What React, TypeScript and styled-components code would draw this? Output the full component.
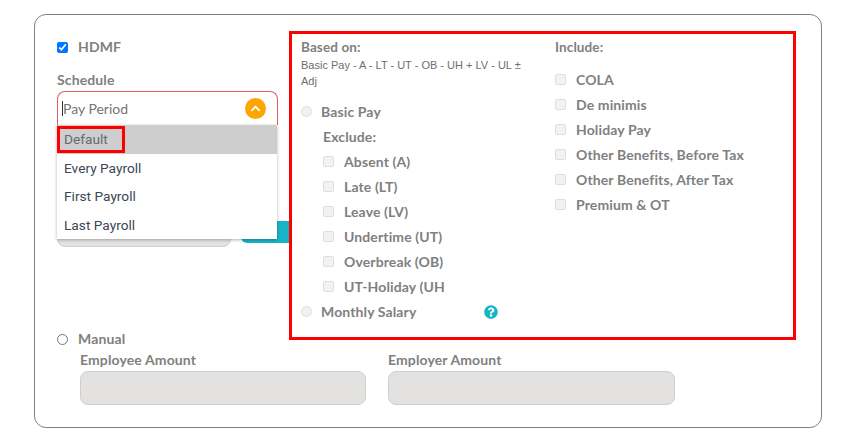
import React from "react";
import styled, { createGlobalStyle } from "styled-components";
import { FaQuestionCircle, FaChevronUp } from "react-icons/fa";

const Global = createGlobalStyle`
  html, body { margin: 0; padding: 0; background: #fff; }
  body { font-family: "Lato", "Liberation Sans", sans-serif; }
`;

const Card = styled.div`
  box-sizing: border-box;
  width: 788px;
  height: 414px;
  margin: 14px 0 0 34px;
  padding: 16px 22px 0;
  border: 1px solid #808080;
  border-radius: 12px;
  display: grid;
  grid-template-columns: 232px 507px;
  grid-template-rows: 301px 14px auto;
`;

const LeftColumn = styled.div`
  display: flex;
  flex-direction: column;
  grid-column: 1;
  grid-row: 1;
`;

const Text = styled.span`
  font-size: 14px;
  font-weight: 700;
  color: #808080;
  line-height: 18px;
  white-space: nowrap;
  letter-spacing: 0.12px;
`;

const Row = styled.label<{ $indent?: number; $mt?: number }>`
  display: flex;
  align-items: center;
  height: 25px;
  padding-left: ${(p) => p.$indent ?? 0}px;
  margin-top: ${(p) => p.$mt ?? 0}px;
`;

const HdmfRow = styled.label`
  display: flex;
  align-items: center;
  height: 18px;
  margin-top: 7px;
`;

const ManualRow = styled.label`
  grid-column: 1;
  grid-row: 2;
  display: flex;
  align-items: center;
  height: 14px;
`;

const NativeCheck = styled.input.attrs({ type: "checkbox" })`
  width: 11px;
  height: 11px;
  margin: 0 10px 0 0;
  flex: none;
  accent-color: #0075ff;
`;

const MutedCheck = styled.input.attrs({ type: "checkbox", disabled: true })`
  appearance: none;
  box-sizing: border-box;
  width: 11px;
  height: 11px;
  margin: 0 10px 0 0;
  flex: none;
  background: #f2f2f2;
  border: 1px solid #dedede;
  border-radius: 2px;
`;

const MutedRadio = styled.input.attrs({ type: "radio", disabled: true })`
  appearance: none;
  box-sizing: border-box;
  width: 11px;
  height: 11px;
  margin: 0 9px 0 0;
  flex: none;
  background: #f2f2f2;
  border: 1px solid #dedede;
  border-radius: 50%;
`;

const OutlineRadio = styled.input.attrs({ type: "radio" })`
  appearance: none;
  box-sizing: border-box;
  width: 11px;
  height: 11px;
  margin: 0 10px 0 0;
  flex: none;
  background: #fff;
  border: 1px solid #767676;
  border-radius: 50%;
`;

const FieldLabel = styled(Text)`
  display: block;
  margin-top: 15px;
`;

const SelectWrap = styled.div`
  position: relative;
  width: 221px;
  margin-top: 2px;
`;

const SelectBox = styled.div`
  box-sizing: border-box;
  height: 34px;
  display: flex;
  align-items: center;
  justify-content: space-between;
  padding: 0 1px 0 4px;
  border: 1px solid #e35d5d;
  border-bottom: none;
  border-radius: 8px 8px 0 0;
`;

const SelectValue = styled.span`
  font-family: "Lato", "Liberation Sans", sans-serif;
  font-size: 14px;
  color: #757575;
  line-height: 15px;
  border-left: 1px solid #333;
`;

const ChevronCircle = styled.span`
  width: 21px;
  height: 21px;
  border-radius: 50%;
  background: #ffa500;
  color: #fff;
  display: flex;
  align-items: center;
  justify-content: center;
  margin-right: 10px;
`;

const Dropdown = styled.ul`
  position: absolute;
  left: 0;
  top: 34px;
  z-index: 2;
  width: 220px;
  margin: 0;
  padding: 0;
  list-style: none;
  background: #fff;
  box-shadow: 0 1px 3px rgba(0, 0, 0, 0.3);
`;

const Option = styled.li<{ $active?: boolean }>`
  position: relative;
  height: ${(p) => (p.$active ? 29 : 28.4)}px;
  line-height: 29px;
  padding-left: 7px;
  font-family: "Roboto", "Liberation Sans", sans-serif;
  font-size: 13.7px;
  color: ${(p) => (p.$active ? "#5f6a72" : "#3c4654")};
  background: ${(p) => (p.$active ? "#cecece" : "#fff")};
`;

const Highlight = styled.span`
  position: absolute;
  left: 0;
  top: 1px;
  width: 68px;
  height: 27px;
  box-sizing: border-box;
  border: 3px solid #ff0000;
`;

const BehindRow = styled.div`
  display: flex;
  align-items: flex-start;
  margin-top: 90px;
`;

const BehindInput = styled.div`
  box-sizing: border-box;
  width: 174px;
  height: 32px;
  background: #e4e1e1;
  border: 1px solid #cfcfcf;
  border-radius: 8px;
`;

const TealButton = styled.div`
  width: 48px;
  height: 22px;
  margin: 6px 0 0 10px;
  background: #17b4c8;
  border-radius: 6px 0 0 6px;
`;

const RedBox = styled.div`
  grid-column: 2;
  grid-row: 1 / 3;
  box-sizing: border-box;
  height: 309px;
  padding: 3px 9px 0;
  border: 3px solid #ff0000;
  display: grid;
  grid-template-columns: 254px 1fr;
`;

const Column = styled.div`
  display: flex;
  flex-direction: column;
`;

const Heading = styled(Text)`
  display: block;
  margin-top: 1px;
  font-size: 13.5px;
`;

const Formula = styled.div`
  font-family: "Liberation Sans", sans-serif;
  font-size: 11px;
  line-height: 16px;
  color: #6e6e6e;
  width: 230px;
  margin-top: 1px;
  margin-bottom: 10px;
`;

const SubHeading = styled(Text)`
  display: flex;
  align-items: center;
  height: 25px;
  padding-left: 22px;
`;

const HelpIcon = styled.span`
  display: inline-flex;
  color: #17b4c8;
  margin-left: 68px;
`;

const Amounts = styled.div`
  grid-column: 1 / -1;
  grid-row: 3;
  display: flex;
  gap: 22px;
  margin: 6px 0 0 23px;
`;

const AmountField = styled.div<{ $width: number }>`
  width: ${(p) => p.$width}px;
`;

const AmountLabel = styled(Text)`
  display: block;
  line-height: 16px;
`;

const AmountInput = styled.div`
  box-sizing: border-box;
  height: 34px;
  margin-top: 3px;
  background: #e4e1e1;
  border: 1px solid #cfcfcf;
  border-radius: 8px;
`;

const exclude = ["Absent (A)", "Late (LT)", "Leave (LV)", "Undertime (UT)", "Overbreak (OB)", "UT-Holiday (UH"];
const include = ["COLA", "De minimis", "Holiday Pay", "Other Benefits, Before Tax", "Other Benefits, After Tax", "Premium & OT"];

export default function App() {
  return (
    <>
      <Global />
      <Card>
        <LeftColumn>
          <HdmfRow>
            <NativeCheck defaultChecked />
            <Text>HDMF</Text>
          </HdmfRow>
          <FieldLabel>Schedule</FieldLabel>
          <SelectWrap>
            <SelectBox>
              <SelectValue>Pay Period</SelectValue>
              <ChevronCircle>
                <FaChevronUp size={11} />
              </ChevronCircle>
            </SelectBox>
            <Dropdown>
              <Option $active>
                Default
                <Highlight />
              </Option>
              <Option>Every Payroll</Option>
              <Option>First Payroll</Option>
              <Option>Last Payroll</Option>
            </Dropdown>
          </SelectWrap>
          <BehindRow>
            <BehindInput />
            <TealButton />
          </BehindRow>
        </LeftColumn>

        <RedBox>
          <Column>
            <Heading>Based on:</Heading>
            <Formula>Basic Pay - A - LT - UT - OB - UH + LV - UL ± Adj</Formula>
            <Row>
              <MutedRadio />
              <Text>Basic Pay</Text>
            </Row>
            <SubHeading>Exclude:</SubHeading>
            {exclude.map((item) => (
              <Row key={item} $indent={22}>
                <MutedCheck />
                <Text>{item}</Text>
              </Row>
            ))}
            <Row>
              <MutedRadio />
              <Text>Monthly Salary</Text>
              <HelpIcon>
                <FaQuestionCircle size={14} />
              </HelpIcon>
            </Row>
          </Column>
          <Column>
            <Heading>Include:</Heading>
            <Row $mt={11}>
              <MutedCheck />
              <Text>{include[0]}</Text>
            </Row>
            {include.slice(1).map((item) => (
              <Row key={item}>
                <MutedCheck />
                <Text>{item}</Text>
              </Row>
            ))}
          </Column>
        </RedBox>

        <ManualRow>
          <OutlineRadio />
          <Text>Manual</Text>
        </ManualRow>

        <Amounts>
          <AmountField $width={286}>
            <AmountLabel>Employee Amount</AmountLabel>
            <AmountInput />
          </AmountField>
          <AmountField $width={287}>
            <AmountLabel>Employer Amount</AmountLabel>
            <AmountInput />
          </AmountField>
        </Amounts>
      </Card>
    </>
  );
}
